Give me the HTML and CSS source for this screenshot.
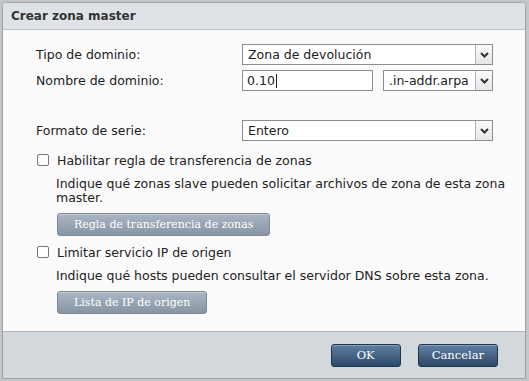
FILE: index.html
```html
<!DOCTYPE html>
<html lang="es">
<head>
    <meta charset="UTF-8">
    <title>Crear zona master</title>
    <link rel="stylesheet" href="styles.css">
</head>
<body>
    <div class="dialog">
        <div class="dialog-header">Crear zona master</div>

        <div class="dialog-body">
            <div class="form-grid">
                <label class="field-label">Tipo de dominio:</label>
                <div class="select wide">
                    <span class="select-text">Zona de devolución</span>
                    <span class="select-arrow"><svg width="9" height="6" viewBox="0 0 9 6"><path d="M1 1 L4.5 4.5 L8 1" fill="none" stroke="#333" stroke-width="2"/></svg></span>
                </div>

                <label class="field-label">Nombre de dominio:</label>
                <div class="domain-row">
                    <div class="text-input">0.10<span class="caret"></span></div>
                    <div class="select small">
                        <span class="select-text">.in-addr.arpa</span>
                        <span class="select-arrow"><svg width="9" height="6" viewBox="0 0 9 6"><path d="M1 1 L4.5 4.5 L8 1" fill="none" stroke="#333" stroke-width="2"/></svg></span>
                    </div>
                </div>

                <label class="field-label spaced">Formato de serie:</label>
                <div class="select wide spaced">
                    <span class="select-text">Entero</span>
                    <span class="select-arrow"><svg width="9" height="6" viewBox="0 0 9 6"><path d="M1 1 L4.5 4.5 L8 1" fill="none" stroke="#333" stroke-width="2"/></svg></span>
                </div>
            </div>

            <div class="option first">
                <label class="check-row"><span class="checkbox"></span>Habilitar regla de transferencia de zonas</label>
                <p class="hint">Indique qué zonas slave pueden solicitar archivos de zona de esta zona master.</p>
                <button class="btn-gray">Regla de transferencia de zonas</button>
            </div>

            <div class="option">
                <label class="check-row"><span class="checkbox"></span>Limitar servicio IP de origen</label>
                <p class="hint">Indique qué hosts pueden consultar el servidor DNS sobre esta zona.</p>
                <button class="btn-gray">Lista de IP de origen</button>
            </div>
        </div>

        <div class="dialog-footer">
            <button class="btn-blue ok">OK</button>
            <button class="btn-blue">Cancelar</button>
        </div>
    </div>
</body>
</html>
```

FILE: styles.css
```css
* {
    margin: 0;
    padding: 0;
    box-sizing: border-box;
}

body {
    font-family: "DejaVu Sans", sans-serif;
    font-size: 12px;
    color: #222;
    background: #c3c6c9;
    width: 529px;
    height: 381px;
    overflow: hidden;
    padding: 2px 0 0 2px;
}

.dialog {
    width: 524px;
    height: 377px;
    border: 1px solid #9ea3a8;
    border-radius: 4px 4px 0 0;
    background: #fafafa;
    display: flex;
    flex-direction: column;
}

.dialog-header {
    height: 27px;
    padding: 0 0 0 8px;
    background: #dfe3e7;
    border-bottom: 1px solid #bfc4c9;
    border-radius: 4px 4px 0 0;
    font-weight: bold;
    font-size: 12px;
    color: #333;
    display: flex;
    align-items: center;
}

.dialog-body {
    flex: 1;
    padding: 14px 0 0 33px;
    border-bottom: 1px solid #aeb2b6;
}

.form-grid {
    display: grid;
    grid-template-columns: 206px 251px;
    row-gap: 5px;
    align-items: center;
}

.field-label {
    font-size: 12.5px;
    color: #222;
}

.spaced {
    margin-top: 24px;
}

.select {
    height: 21px;
    border: 1px solid #8a8f94;
    background: #fff;
    display: flex;
    align-items: stretch;
}

.select-text {
    flex: 1;
    padding-left: 5px;
    font-size: 12.5px;
    line-height: 19px;
}

.select-arrow {
    width: 17px;
    border-left: 1px solid #b0b4b8;
    background: linear-gradient(#fafafa, #e4e6e8);
    display: flex;
    align-items: center;
    justify-content: center;
}

.domain-row {
    display: flex;
    justify-content: space-between;
}

.text-input {
    width: 131px;
    height: 21px;
    border: 1px solid #8a8f94;
    background: #fff;
    padding-left: 4px;
    font-size: 12.5px;
    line-height: 19px;
    display: flex;
    align-items: center;
}

.caret {
    width: 1px;
    height: 14px;
    background: #222;
    margin-left: 1px;
}

.select.small {
    width: 110px;
}

.option {
    padding: 9px 0 0 1px;
}

.option.first {
    padding-top: 12px;
}

.check-row {
    display: flex;
    align-items: center;
    gap: 8px;
    font-size: 12.5px;
    height: 14px;
}

.checkbox {
    width: 12px;
    height: 12px;
    border: 1px solid #777;
    border-radius: 2px;
    background: #fff;
}

.hint {
    margin: 10px 0 0 19px;
    width: 455px;
    font-size: 12.5px;
    line-height: 14px;
}

.btn-gray {
    margin: 8px 0 0 20px;
    height: 23px;
    padding: 0 16px;
    border: 1px solid #7f8a96;
    border-radius: 3px;
    background: linear-gradient(#aab6c3, #8794a3);
    color: #fff;
    font-family: "DejaVu Serif", serif;
    font-size: 11px;
    box-shadow: inset 0 1px 0 rgba(255, 255, 255, 0.3);
}

.dialog-footer {
    height: 46px;
    background: #d3d8dc;
    display: flex;
    justify-content: flex-end;
    align-items: center;
    gap: 17px;
    padding-right: 27px;
}

.btn-blue {
    height: 23px;
    min-width: 70px;
    padding: 0 13px;
    border: 1px solid #1f3550;
    border-radius: 3px;
    background: linear-gradient(#5f7fa3, #2c4968);
    color: #fff;
    font-family: "DejaVu Serif", serif;
    font-size: 11.5px;
    box-shadow: inset 0 1px 0 rgba(255, 255, 255, 0.25);
}
```
